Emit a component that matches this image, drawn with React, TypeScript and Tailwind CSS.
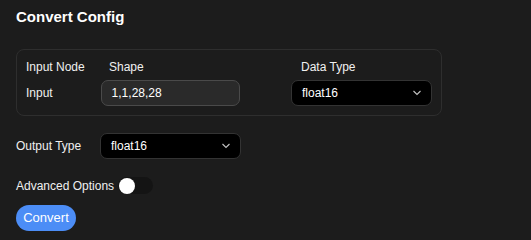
import {useState} from 'react'

const Chevron = () => (
	<svg width="10" height="10" viewBox="0 0 10 10" fill="none" stroke="#c4c4c4" strokeWidth="1.1">
		<path d="M1.5 3 L5 6.5 L8.5 3"/>
	</svg>
)

const Select = ({value}: {value: string}) => (
	<div className="flex items-center justify-between w-[141px] h-[26px] pl-[10px] pr-[9px] bg-black border border-[#333] rounded-[7px] text-[12px] text-white">
		<span>{value}</span>
		<Chevron/>
	</div>
)

export default function App() {
	const [advanced, setAdvanced] = useState(false)
	return (
		<div className="w-[531px] h-[240px] bg-[#1c1c1c] text-[#f0f0f0] text-[12px] px-[16px] pt-[8px]"
			style={{fontFamily: '"Liberation Sans", Arial, sans-serif'}}>
			<h1 className="text-[15px] font-bold leading-[18px] h-[18px] text-white">Convert Config</h1>

			<div className="mt-[23px] w-[426px] border border-[#2e2e2e] rounded-[8px] px-[9px] py-[9px]">
				<div className="flex items-center h-[16px]">
					<div className="w-[75px]">Input Node</div>
					<div className="w-[191px] pl-[8px]">Shape</div>
					<div className="pl-[9px]">Data Type</div>
				</div>
				<div className="flex items-center mt-[4px]">
					<div className="w-[75px]">Input</div>
					<div className="w-[140px] h-[26px] flex items-center px-[10px] bg-[#2a2a2a] border border-[#4a4a4a] rounded-[7px] text-white">
						1,1,28,28
					</div>
					<div className="ml-[51px] mt-[1px]">
						<Select value="float16"/>
					</div>
				</div>
			</div>

			<div className="flex items-center mt-[17px]">
				<div className="w-[84px]">Output Type</div>
				<Select value="float16"/>
			</div>

			<div className="flex items-center mt-[18px] h-[17px]">
				<span>Advanced Options</span>
				<button
					onClick={() => setAdvanced(!advanced)}
					className={`ml-[4px] w-[35px] h-[17px] rounded-full flex items-center px-[1px] ${advanced ? 'bg-[#4c8df6] justify-end' : 'bg-[#141414] justify-start'}`}>
					<span className="block w-[16px] h-[16px] rounded-full bg-white"/>
				</button>
			</div>

			<button className="mt-[11px] w-[60px] h-[26px] rounded-full bg-[#4c8df6] text-white text-[13px]">
				Convert
			</button>
		</div>
	)
}
